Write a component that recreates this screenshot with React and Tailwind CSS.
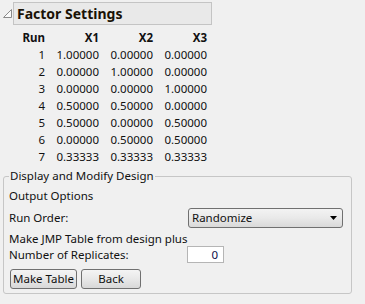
import React from 'react';

const rows = [
  ['1', '1.00000', '0.00000', '0.00000'],
  ['2', '0.00000', '1.00000', '0.00000'],
  ['3', '0.00000', '0.00000', '1.00000'],
  ['4', '0.50000', '0.50000', '0.00000'],
  ['5', '0.50000', '0.00000', '0.50000'],
  ['6', '0.00000', '0.50000', '0.50000'],
  ['7', '0.33333', '0.33333', '0.33333'],
];

const btn =
  'h-[20px] rounded-[3px] border border-[#707070] bg-gradient-to-b from-[#f4f4f4] via-[#e8e8e8] to-[#d8d8d8] text-[11.5px] leading-none text-[#111]';

const App = () => {
  return (
    <div
      className="w-[365px] h-[304px] bg-[#f0f0f0] text-[#111] text-[11.5px] overflow-hidden"
      style={{ fontFamily: '"Noto Sans", "Liberation Sans", sans-serif' }}
    >
      {/* Outline header */}
      <div className="flex items-start pt-[2px]">
        <svg width="13" height="22" viewBox="0 0 13 22" className="mt-[1px]">
          <polygon points="11.5,6.5 11.5,14.5 3.5,14.5" fill="#fafafa" stroke="#8a8a8a" strokeWidth="1" />
        </svg>
        <div className="w-[199px] h-[23px] border border-[#c4c4c4] bg-[#e9e9e9] flex items-center pl-[3px]">
          <span className="text-[14px] font-bold leading-none text-[#1a1206]">Factor Settings</span>
        </div>
      </div>

      {/* Design table */}
      <div className="grid grid-cols-[45px_54px_54px_54px] mt-[4px] leading-[17px] text-right">
        <div className="font-bold">Run</div>
        <div className="font-bold">X1</div>
        <div className="font-bold">X2</div>
        <div className="font-bold">X3</div>
        {rows.map((r) => (
          <React.Fragment key={r[0]}>
            {r.map((c, i) => (
              <div key={i}>{c}</div>
            ))}
          </React.Fragment>
        ))}
      </div>

      {/* Display and Modify Design group */}
      <fieldset className="ml-[3px] mt-[3px] w-[349px] border border-[#c6c6c6] rounded-[3px] px-[5px] pb-[4px]">
        <legend className="px-[1px] leading-[16px]">Display and Modify Design</legend>
        <div className="h-[20px] flex items-center mt-[2px]">Output Options</div>
        <div className="flex items-center mt-[2px] h-[20px]">
          <div className="w-[179px]">Run Order:</div>
          <div className="w-[155px] h-[20px] rounded-[3px] border border-[#707070] bg-gradient-to-b from-[#f3f3f3] via-[#e9e9e9] to-[#d9d9d9] flex items-center pl-[3px] pr-[5px]">
            <span className="flex-1">Randomize</span>
            <svg width="7" height="4" viewBox="0 0 7 4">
              <polygon points="0,0 7,0 3.5,4" fill="#000" />
            </svg>
          </div>
        </div>
        <div className="h-[15px] flex items-center mt-[3px]">Make JMP Table from design plus</div>
        <div className="flex items-center h-[17px]">
          <div className="w-[178px]">Number of Replicates:</div>
          <div className="w-[37px] h-[17px] bg-white border border-[#b5b5b5] flex items-center justify-end pr-[5px] text-[#10104a]">
            0
          </div>
        </div>
        <div className="flex gap-[4px] mt-[6px] ml-[1px]">
          <button className={`${btn} w-[67px]`}>Make Table</button>
          <button className={`${btn} w-[60px]`}>Back</button>
        </div>
      </fieldset>
    </div>
  );
};

export default App;
